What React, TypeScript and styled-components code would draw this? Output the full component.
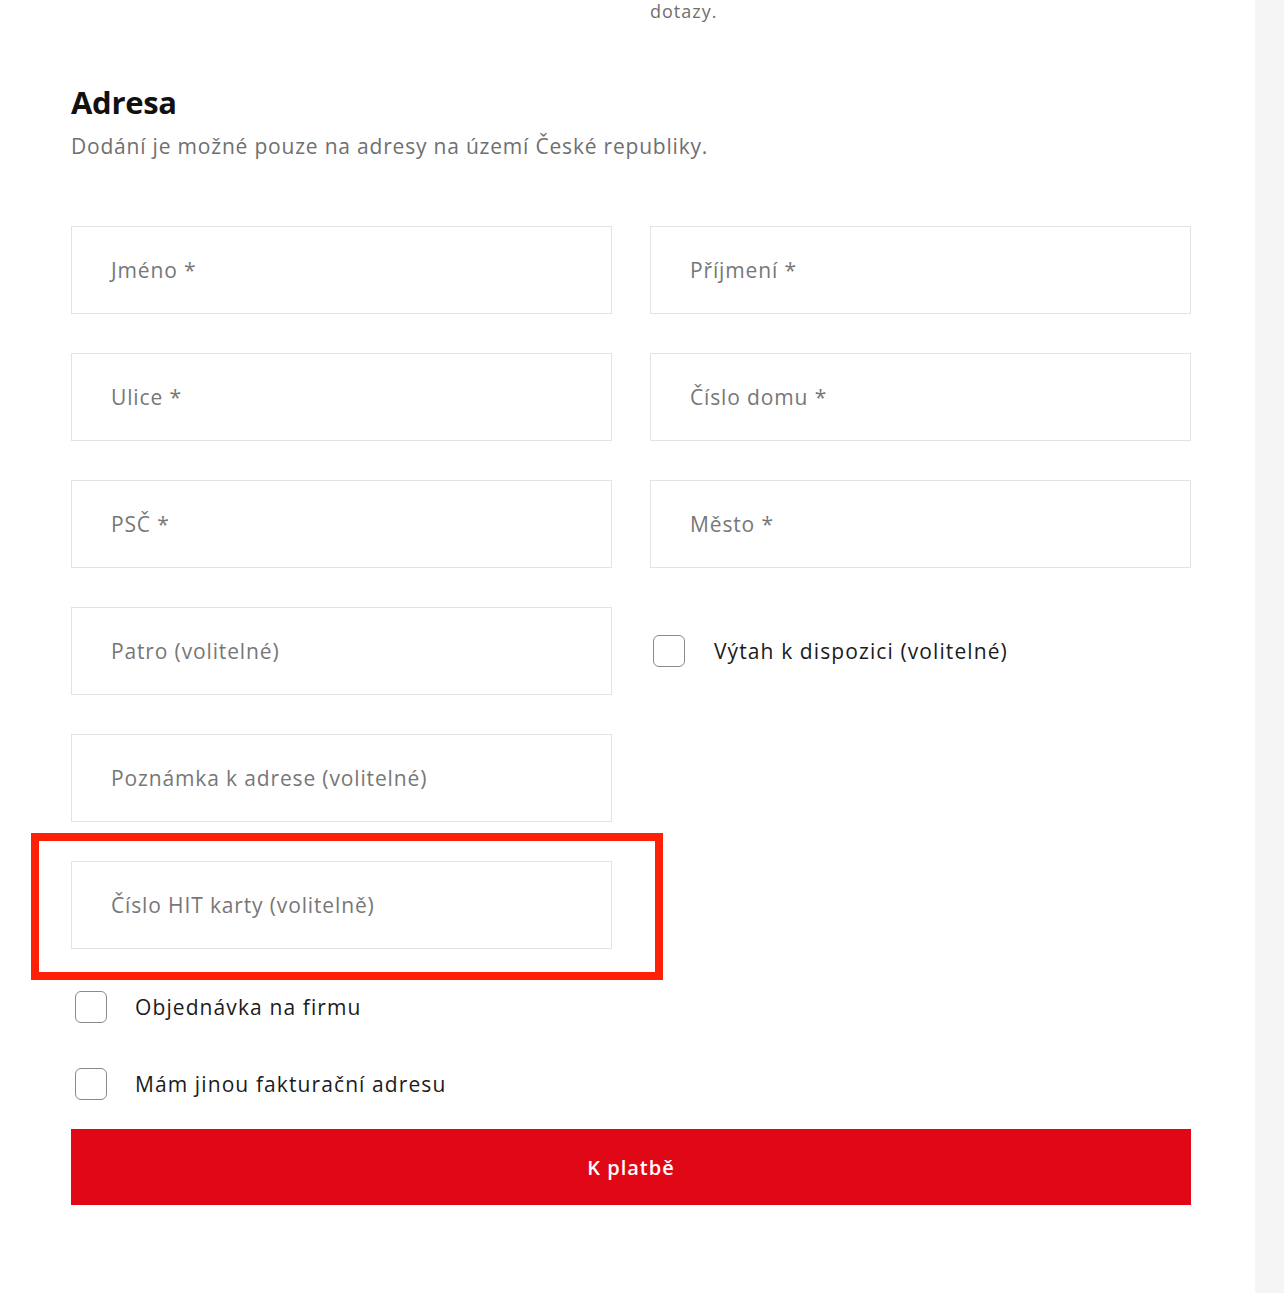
import React from "react";
import styled, { createGlobalStyle } from "styled-components";

const Global = createGlobalStyle`
  html, body { margin: 0; padding: 0; background: #fff; }
  body { font-family: "Open Sans", "Noto Sans", sans-serif; }
  * { box-sizing: border-box; }
`;

const Page = styled.div`
  display: flex;
  width: 1284px;
  height: 1293px;
  overflow: hidden;
`;

const Main = styled.div`
  flex: 1;
  padding: 0 64px 0 71px;
  position: relative;
`;

const Strip = styled.div`
  width: 29px;
  background: #f5f5f5;
`;

const TopRow = styled.div`
  display: grid;
  grid-template-columns: 541px 541px;
  column-gap: 38px;
  margin-top: -3px;
`;

const TopText = styled.p`
  grid-column: 2;
  margin: 0;
  font-size: 18px;
  line-height: 28px;
  letter-spacing: 1px;
  color: #6f6f6f;
`;

const Title = styled.h2`
  margin: 55px 0 0;
  font-size: 31px;
  font-weight: 700;
  line-height: 44px;
  color: #111;
  letter-spacing: -0.3px;
`;

const Subtitle = styled.p`
  margin: 7px 0 0;
  font-size: 21px;
  line-height: 30px;
  letter-spacing: 0.8px;
  color: #6f6f6f;
`;

const Grid = styled.div`
  display: grid;
  grid-template-columns: 541px 541px;
  column-gap: 38px;
  row-gap: 39px;
  margin-top: 65px;
  width: 1120px;
`;

const Field = styled.div`
  height: 88px;
  border: 1px solid #e3e3e3;
  display: flex;
  align-items: center;
  padding-left: 39px;
  font-size: 21px;
  letter-spacing: 0.86px;
  color: #777;
  background: #fff;
`;

const CheckRow = styled.label<{ $pad?: number }>`
  display: flex;
  align-items: center;
  gap: 29px;
  padding-left: ${(p) => p.$pad ?? 0}px;
  font-size: 21px;
  letter-spacing: 1.1px;
  color: #1b1b1b;
  height: 88px;
`;

const Box = styled.span`
  width: 32px;
  height: 32px;
  border: 1.5px solid #8a8a8a;
  border-radius: 6px;
  flex: none;
`;

const Highlight = styled.div`
  position: relative;
`;

const Marker = styled.div`
  position: absolute;
  left: -40px;
  top: -28px;
  width: 632px;
  height: 147px;
  border: 8px solid #ff2008;
  pointer-events: none;
`;

const Checks = styled.div`
  display: flex;
  flex-direction: column;
  gap: 45px;
  margin-top: 42px;
  padding-left: 4px;
`;

const SmallCheck = styled(CheckRow)`
  height: 32px;
  gap: 28px;
`;

const Button = styled.button`
  display: block;
  width: 1120px;
  height: 76px;
  margin-top: 29px;
  border: none;
  background: #e00816;
  color: #fff;
  font-family: "Open Sans", "Noto Sans", sans-serif;
  font-size: 20px;
  font-weight: 600;
  letter-spacing: 1px;
  cursor: pointer;
`;

export default function App() {
  return (
    <>
      <Global />
      <Page>
        <Main>
          <TopRow>
            <TopText>dotazy.</TopText>
          </TopRow>
          <Title>Adresa</Title>
          <Subtitle>Dodání je možné pouze na adresy na území České republiky.</Subtitle>
          <Grid>
            <Field>Jméno *</Field>
            <Field>Příjmení *</Field>
            <Field>Ulice *</Field>
            <Field>Číslo domu *</Field>
            <Field>PSČ *</Field>
            <Field>Město *</Field>
            <Field>Patro (volitelné)</Field>
            <CheckRow $pad={3}>
              <Box />
              Výtah k dispozici (volitelné)
            </CheckRow>
            <Field>Poznámka k adrese (volitelné)</Field>
            <div />
            <Highlight>
              <Field>Číslo HIT karty (volitelně)</Field>
              <Marker />
            </Highlight>
          </Grid>
          <Checks>
            <SmallCheck>
              <Box />
              Objednávka na firmu
            </SmallCheck>
            <SmallCheck>
              <Box />
              Mám jinou fakturační adresu
            </SmallCheck>
          </Checks>
          <Button>K platbě</Button>
        </Main>
        <Strip />
      </Page>
    </>
  );
}
